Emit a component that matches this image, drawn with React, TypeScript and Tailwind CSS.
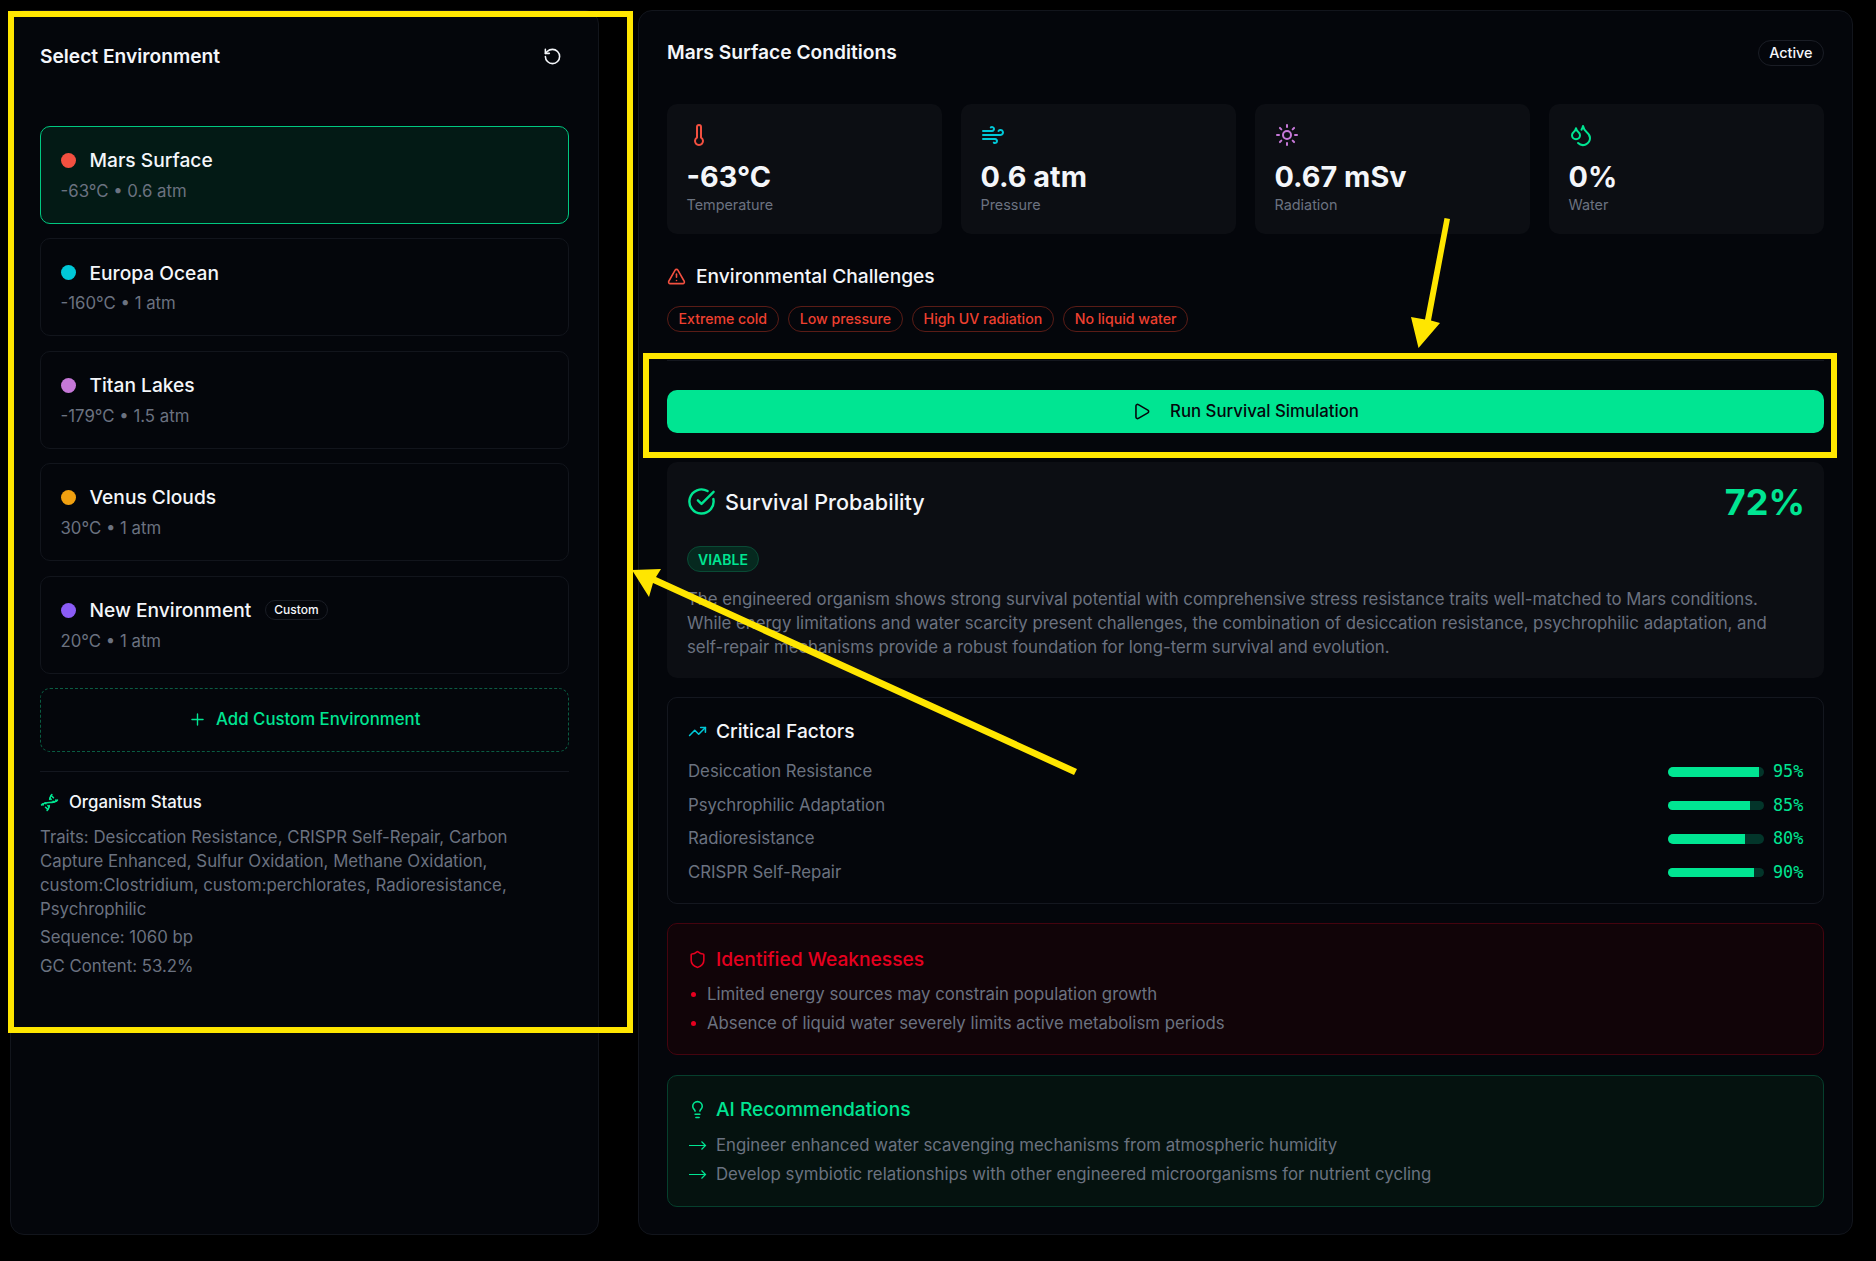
import React from 'react';
import { RotateCcw, Thermometer, Wind, Sun, Droplets, TriangleAlert, Play, CircleCheckBig, TrendingUp, Shield, Lightbulb, Dna, Plus } from 'lucide-react';

const ENVIRONMENTS = [
  { name: 'Mars Surface', info: '-63°C • 0.6 atm', dot: 'bg-[#f35040]', active: true },
  { name: 'Europa Ocean', info: '-160°C • 1 atm', dot: 'bg-[#00c8d8]' },
  { name: 'Titan Lakes', info: '-179°C • 1.5 atm', dot: 'bg-[#c678d8]' },
  { name: 'Venus Clouds', info: '30°C • 1 atm', dot: 'bg-[#f0a010]' },
  { name: 'New Environment', info: '20°C • 1 atm', dot: 'bg-[#8b5cf6]', custom: true },
];

const STATS = [
  { icon: Thermometer, color: 'text-[#f35040]', value: '-63°C', label: 'Temperature' },
  { icon: Wind, color: 'text-[#00c8d8]', value: '0.6 atm', label: 'Pressure' },
  { icon: Sun, color: 'text-[#c678d8]', value: '0.67 mSv', label: 'Radiation' },
  { icon: Droplets, color: 'text-[#00e592]', value: '0%', label: 'Water' },
];

const CHALLENGES = ['Extreme cold', 'Low pressure', 'High UV radiation', 'No liquid water'];

const FACTORS = [
  { name: 'Desiccation Resistance', score: 95 },
  { name: 'Psychrophilic Adaptation', score: 85 },
  { name: 'Radioresistance', score: 80 },
  { name: 'CRISPR Self-Repair', score: 90 },
];

const App: React.FC = () => {
  return (
    <div className="relative min-h-[1261px] bg-black pl-[10px] pt-[10px] font-['Inter',sans-serif] text-[#f4f6fa]">
      <div className="flex items-start gap-[39px]">
        {/* Environment sidebar */}
        <aside className="h-[1225px] w-[589px] shrink-0 rounded-[14px] border border-[#12151c] bg-[#04060b] pl-[29px] pr-[29.5px]">
          <div className="flex h-[92px] items-center justify-between pb-[2px]">
            <h2 className="text-[19.2px] font-semibold">Select Environment</h2>
            <RotateCcw className="mr-[7px] h-[19px] w-[19px]" />
          </div>

          <div className="mt-[23px] flex flex-col gap-[14.4px]">
            {ENVIRONMENTS.map((env) => (
              <div
                key={env.name}
                className={`h-[98px] rounded-[10px] border px-[19.5px] pt-[20px] ${
                  env.active ? 'border-[#00c880] bg-[#031a15]' : 'border-[#12151c] bg-[#04060b]'
                }`}
              >
                <div className="flex h-[27px] items-center">
                  <span className={`h-[15px] w-[15px] rounded-full ${env.dot}`} />
                  <span className="ml-[14px] text-[19.2px] font-medium">{env.name}</span>
                  {env.custom && (
                    <span className="ml-[14px] flex h-[20px] items-center rounded-full border border-[#1a1d25] px-[8px] text-[12px] font-medium">
                      Custom
                    </span>
                  )}
                </div>
                <div className="mt-[5px] text-[16.8px] leading-[24px] text-[#6b7280]">{env.info}</div>
              </div>
            ))}
          </div>

          <button className="mt-[14.4px] flex h-[64px] w-full items-center justify-center gap-[9px] rounded-[10px] border border-dashed border-[#0a5c42] text-[16.8px] font-medium text-[#00e592]">
            <Plus className="h-[19px] w-[19px]" strokeWidth={1.75} />
            Add Custom Environment
          </button>

          <div className="mt-[19px] border-t border-[#14171f] pt-[19px]">
            <div className="flex h-[24px] items-center gap-[10px]">
              <Dna className="h-[19px] w-[19px] text-[#00e592]" />
              <span className="text-[16.8px] font-medium">Organism Status</span>
            </div>
            <p className="mt-[10px] text-[16.8px] leading-[24px] text-[#6b7280]">
              Traits: Desiccation Resistance, CRISPR Self-Repair, Carbon Capture Enhanced, Sulfur Oxidation, Methane Oxidation, custom:Clostridium, custom:perchlorates, Radioresistance, Psychrophilic
            </p>
            <p className="mt-[4.5px] text-[16.8px] leading-[24px] text-[#6b7280]">Sequence: 1060 bp</p>
            <p className="mt-[4.5px] text-[16.8px] leading-[24px] text-[#6b7280]">GC Content: 53.2%</p>
          </div>
        </aside>

        {/* Conditions panel */}
        <main className="h-[1225px] w-[1215px] shrink-0 rounded-[14px] border border-[#12151c] bg-[#04060b] px-[28px]">
          <div className="flex h-[83px] items-center justify-between pb-[1px]">
            <h2 className="text-[19.2px] font-semibold">Mars Surface Conditions</h2>
            <span className="mt-[1px] flex h-[26px] items-center rounded-full border border-[#1a1d25] px-[10.5px] text-[14.4px] font-medium">Active</span>
          </div>

          <div className="mt-[10px] grid grid-cols-4 gap-[19px]">
            {STATS.map((stat) => (
              <div key={stat.label} className="h-[130px] rounded-[10px] bg-[#0c0e13] px-[19.5px] pt-[19px]">
                <stat.icon className={`h-[24px] w-[24px] ${stat.color}`} />
                <div className="mt-[10.5px] text-[28.8px] font-bold leading-[37px]">{stat.value}</div>
                <div className="text-[14.4px] leading-[20px] text-[#6b7280]">{stat.label}</div>
              </div>
            ))}
          </div>

          <div className="mt-[29px] flex h-[26px] items-center gap-[10px]">
            <TriangleAlert className="h-[19px] w-[19px] text-[#f35040]" />
            <span className="text-[19.2px] font-medium">Environmental Challenges</span>
          </div>

          <div className="mt-[17px] flex gap-[9.6px]">
            {CHALLENGES.map((item) => (
              <span key={item} className="flex h-[26px] items-center rounded-full border border-[#5a1c16] px-[10.5px] text-[14.15px] font-medium text-[#ee4030]">
                {item}
              </span>
            ))}
          </div>

          <div className="mt-[28px] border-t border-[#14171f] pt-[29px]">
            <button className="flex h-[43px] w-full items-center justify-center gap-[19px] rounded-[10px] bg-[#00e592] text-[16.8px] font-medium text-[#05070c]">
              <Play className="h-[19px] w-[19px]" />
              Run Survival Simulation
            </button>
          </div>

          <section className="mt-[29px] h-[216px] rounded-[10px] bg-[#0c0e13] pl-[20px] pr-[19px] pt-[19px]">
            <div className="flex h-[42px] items-center justify-between">
              <div className="flex items-center gap-[9px]">
                <CircleCheckBig className="h-[29px] w-[29px] text-[#00e592]" />
                <span className="text-[21.6px] font-medium">Survival Probability</span>
              </div>
              <span className="text-[36px] font-bold text-[#00e592]">72%</span>
            </div>
            <span className="mt-[23px] inline-flex h-[26px] items-center rounded-full border border-[#0a4a35] bg-[#06291f] px-[10px] text-[14px] font-semibold text-[#00e592]">
              VIABLE
            </span>
            <p className="mt-[14.5px] text-[16.8px] leading-[24px] text-[#6b7280]">
              The engineered organism shows strong survival potential with comprehensive stress resistance traits well-matched to Mars conditions. While energy limitations and water scarcity present challenges, the combination of desiccation resistance, psychrophilic adaptation, and self-repair mechanisms provide a robust foundation for long-term survival and evolution.
            </p>
          </section>

          <section className="mt-[19px] h-[207px] rounded-[10px] border border-[#14171f] pl-[20px] pr-[19px] pt-[20px]">
            <div className="flex h-[26px] items-center gap-[9px]">
              <TrendingUp className="h-[19px] w-[19px] text-[#00c8d8]" />
              <span className="text-[19.2px] font-medium">Critical Factors</span>
            </div>
            <div className="mt-[11px] flex flex-col">
              {FACTORS.map((factor) => (
                <div key={factor.name} className="flex h-[33.6px] items-center justify-between">
                  <span className="text-[16.8px] text-[#6b7280]">{factor.name}</span>
                  <div className="flex items-center gap-[9px]">
                    <div className="h-[9.6px] w-[96px] overflow-hidden rounded-full bg-[#03352a]">
                      <div className="h-full bg-[#00e592]" style={{ width: `${factor.score}%` }} />
                    </div>
                    <span className="w-[31px] font-['DejaVu_Sans_Mono',monospace] text-[16.8px] text-[#00e592]">{factor.score}%</span>
                  </div>
                </div>
              ))}
            </div>
          </section>

          <section className="mt-[19px] h-[132px] rounded-[10px] border border-[#45040f] bg-[#110408] px-[20px] pt-[22px]">
            <div className="flex h-[26px] items-center gap-[9px]">
              <Shield className="h-[19px] w-[19px] text-[#e6001f]" />
              <span className="text-[19.2px] font-medium text-[#e6001f]">Identified Weaknesses</span>
            </div>
            <ul className="mt-[8.5px]">
              <li className="flex h-[28.8px] items-center gap-[11px] text-[16.8px] text-[#6b7280]">
                <span className="ml-[3px] h-[5px] w-[5px] rounded-full bg-[#e6001f]" />
                Limited energy sources may constrain population growth
              </li>
              <li className="flex h-[28.8px] items-center gap-[11px] text-[16.8px] text-[#6b7280]">
                <span className="ml-[3px] h-[5px] w-[5px] rounded-full bg-[#e6001f]" />
                Absence of liquid water severely limits active metabolism periods
              </li>
            </ul>
          </section>

          <section className="mt-[20px] h-[132px] rounded-[10px] border border-[#063f2d] bg-[#05120f] px-[20px] pt-[20px]">
            <div className="flex h-[26px] items-center gap-[9px]">
              <Lightbulb className="h-[19px] w-[19px] text-[#00e592]" />
              <span className="text-[19.2px] font-medium text-[#00e592]">AI Recommendations</span>
            </div>
            <ul className="mt-[9px]">
              {['Engineer enhanced water scavenging mechanisms from atmospheric humidity', 'Develop symbiotic relationships with other engineered microorganisms for nutrient cycling'].map((tip) => (
                <li key={tip} className="flex h-[28.8px] items-center gap-[9px] text-[16.8px] text-[#6b7280]">
                  <svg className="h-[12px] w-[19px] shrink-0 text-[#00e592]" viewBox="0 0 19 12" fill="none" stroke="currentColor" strokeWidth="1.2">
                    <path d="M1 6.5H17.5M13.5 2.5L17.5 6.5L13.5 10.5" />
                  </svg>
                  {tip}
                </li>
              ))}
            </ul>
          </section>
        </main>
      </div>

      {/* Yellow annotation marks laid over the page */}
      <div className="pointer-events-none absolute left-[8px] top-[11px] h-[1022px] w-[625px] border-[6px] border-[#ffe600]" />
      <div className="pointer-events-none absolute left-[643px] top-[353px] h-[105px] w-[1194px] border-[6px] border-[#ffe600]" />
      <svg className="pointer-events-none absolute left-0 top-0" width="1876" height="1261" fill="#ffe600">
        <path d="M1444.5 218L1450 219L1431 320.5L1440 323L1418.5 348L1411 317L1425 319.5Z" />
        <path d="M1077 769L1074 775L653 583L649 597L632 570L661 569L656 577Z" />
      </svg>
    </div>
  );
};

export default App;
